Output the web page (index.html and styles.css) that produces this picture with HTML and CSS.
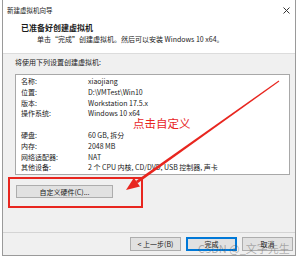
FILE: index.html
```html
<!DOCTYPE html>
<html lang="zh-CN">
<head>
    <meta charset="UTF-8">
    <meta name="viewport" content="width=device-width, initial-scale=1.0">
    <title>新建虚拟机向导</title>
    <link rel="stylesheet" href="styles.css">
</head>
<body>
    <div class="window">
        <div class="titlebar">
            <span class="title">新建虚拟机向导</span>
            <svg class="close" width="7" height="7" viewBox="0 0 7 7">
                <path d="M0.5 0.5 L6.5 6.5 M6.5 0.5 L0.5 6.5" stroke="#333" stroke-width="1"/>
            </svg>
        </div>

        <div class="header">
            <div class="header-title">已准备好创建虚拟机</div>
            <div class="header-sub">单击“完成”创建虚拟机。然后可以安装 Windows 10 x64。</div>
        </div>

        <div class="content">
            <div class="caption">将使用下列设置创建虚拟机:</div>
            <div class="summary">
                <div class="row"><span class="label">名称:</span><span>xiaojiang</span></div>
                <div class="row"><span class="label">位置:</span><span>D:\VMTest\Win10</span></div>
                <div class="row"><span class="label">版本:</span><span>Workstation 17.5.x</span></div>
                <div class="row"><span class="label">操作系统:</span><span>Windows 10 x64</span></div>
                <div class="row"></div>
                <div class="row"><span class="label">硬盘:</span><span>60 GB, 拆分</span></div>
                <div class="row"><span class="label">内存:</span><span>2048 MB</span></div>
                <div class="row"><span class="label">网络适配器:</span><span>NAT</span></div>
                <div class="row"><span class="label">其他设备:</span><span>2 个 CPU 内核, CD/DVD, USB 控制器, 声卡</span></div>
            </div>
            <button class="btn btn-wide">自定义硬件(C)...</button>
        </div>

        <div class="footer">
            <button class="btn">&lt; 上一步(B)</button>
            <button class="btn btn-default">完成</button>
            <button class="btn">取消</button>
        </div>
    </div>

    <!-- 红色标注 -->
    <div class="mark-box"></div>
    <div class="mark-text">点击自定义</div>
    <svg class="mark-arrow" width="300" height="260" viewBox="0 0 300 260">
        <polygon points="278.7,80.6 279.3,81.4 137.7,183.3 135.9,180.9" fill="#e8261f"/>
        <polygon points="126,190 133.9,177.8 140,186.4" fill="#e8261f"/>
    </svg>

    <div class="watermark">CSDN @_文字先生</div>
</body>
</html>
```

FILE: styles.css
```css
* {
    box-sizing: border-box;
}

body {
    margin: 0;
    width: 300px;
    height: 260px;
    overflow: hidden;
    background: #fff;
    font-family: "Noto Sans CJK SC", "Noto Sans", sans-serif;
    font-size: 7px;
    color: #1a1a1a;
}

.window {
    display: flex;
    flex-direction: column;
    width: 294px;
    height: 256px;
    margin-left: 2px;
    border: 1px solid #9a9a9a;
    border-top: none;
    background: #f0f0f0;
}

.titlebar {
    display: flex;
    align-items: center;
    justify-content: space-between;
    height: 20px;
    padding: 0 5px 0 4px;
    background: #fff;
}

.title {
    font-size: 6.5px;
}

.header {
    height: 34px;
    padding: 3px 0 0 18px;
    background: #fff;
    border-bottom: 1px solid #dcdcdc;
}

.header-title {
    font-size: 8px;
    font-weight: bold;
    line-height: 10px;
}

.header-sub {
    margin-top: 1px;
    padding-left: 16px;
    line-height: 10px;
}

.content {
    flex: 1;
    display: flex;
    flex-direction: column;
    align-items: flex-start;
    padding: 3px 5px 0 12px;
    border-bottom: 1px solid #d4d4d4;
}

.caption {
    line-height: 11px;
}

.summary {
    align-self: stretch;
    margin-top: 6px;
    padding: 1px 0 1px 5px;
    background: #fff;
    border: 1px solid #a8a8a8;
}

.row {
    display: flex;
    height: 10.8px;
    line-height: 10.8px;
    white-space: nowrap;
}

.label {
    width: 67px;
}

.btn {
    height: 14px;
    width: 51px;
    padding: 0;
    font-family: inherit;
    font-size: 7px;
    color: #1a1a1a;
    background: #e1e1e1;
    border: 1px solid #adadad;
}

.btn-wide {
    width: 97px;
    height: 13px;
    margin: 10px 0 0 1px;
}

.btn-default {
    border-color: #0078d7;
    box-shadow: inset 0 0 0 1px #0078d7;
}

.footer {
    display: flex;
    justify-content: flex-end;
    gap: 5px;
    height: 22px;
    padding: 4px 2px 0 0;
}

/* 标注层 */
.mark-box {
    position: absolute;
    left: 8px;
    top: 177px;
    width: 135px;
    height: 31px;
    border: 2px solid #e8261f;
}

.mark-text {
    position: absolute;
    left: 133px;
    top: 115px;
    font-size: 11.5px;
    line-height: 16px;
    color: #e8261f;
}

.mark-arrow {
    position: absolute;
    left: 0;
    top: 0;
}

.watermark {
    position: absolute;
    left: 198px;
    top: 240px;
    font-size: 11px;
    line-height: 16px;
    color: rgba(90, 90, 90, 0.45);
}
```
